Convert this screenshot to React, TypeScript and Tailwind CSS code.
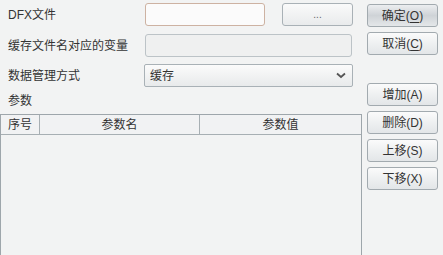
import React from "react";

const font = { fontFamily: '"Liberation Sans", "Noto Sans CJK SC", sans-serif' };

const SideButton = ({
  label,
  mnemonic,
  primary,
  underline,
  className,
}: {
  label: string;
  mnemonic: string;
  primary?: boolean;
  underline?: boolean;
  className?: string;
}) => (
  <button
    className={`w-[71px] h-[23px] flex items-center justify-center rounded-[3px] border border-[#a2aaaf] text-[12px] text-[#333] ${
      primary
        ? "bg-gradient-to-b from-[#eceef0] via-[#cfd3d7] to-[#e4e7e9]"
        : "bg-gradient-to-b from-[#fbfbfb] via-[#eef0f1] to-[#e3e6e8]"
    } ${className ?? ""}`}
  >
    {label}(
    <span className={underline ? "underline underline-offset-2" : ""}>
      {mnemonic}
    </span>
    )
  </button>
);

export default function App() {
  return (
    <div
      className="w-[443px] h-[255px] bg-[#f2f3f3] overflow-hidden flex text-[12px] text-[#333]"
      style={font}
    >
      {/* Left side */}
      <div className="w-[362px] pt-[3px] flex flex-col">
        <div className="flex items-center h-[23px]">
          <span className="w-[145px] pl-[8px]">DFX文件</span>
          <div className="w-[120px] h-[23px] rounded-[3px] border border-[#cdb2a2] bg-[#fbfbfb]" />
          <button className="ml-[17px] w-[71px] h-[23px] rounded-[3px] border border-[#a9b1b6] bg-gradient-to-b from-[#fafafa] to-[#e9ebec] text-[10px] text-[#666] leading-none">
            ...
          </button>
        </div>

        <div className="flex items-center h-[23px] mt-[8px]">
          <span className="w-[145px] pl-[8px]">缓存文件名对应的变量</span>
          <div className="w-[207px] h-[23px] rounded-[3px] border border-[#bcc3c7] bg-[#eff0f0]" />
        </div>

        <div className="flex items-center h-[23px] mt-[7px]">
          <span className="w-[144px] pl-[8px]">数据管理方式</span>
          <div className="w-[209px] h-[23px] rounded-[2px] border border-[#a9b1b6] bg-gradient-to-b from-[#fbfbfb] to-[#e8eaeb] flex items-center justify-between pl-[5px] pr-[6px]">
            <span>缓存</span>
            <svg width="10" height="7" viewBox="0 0 10 7">
              <path d="M1 1.5 L5 5 L9 1.5" fill="none" stroke="#555" strokeWidth="1.8" />
            </svg>
          </div>
        </div>

        <div className="h-[27px] flex items-center pl-[8px] pt-[1px]">参数</div>

        <div className="flex-1 border border-[#9ea6ab] border-b-0 bg-[#f2f3f3]">
          <div className="flex h-[20px] border-b border-[#a7afb3] bg-[#f1f2f3]">
            <div className="w-[39px] flex items-center justify-center border-r border-[#a7afb3]">序号</div>
            <div className="w-[160px] flex items-center justify-center border-r border-[#a7afb3]">参数名</div>
            <div className="flex-1 flex items-center justify-center">参数值</div>
          </div>
        </div>
      </div>

      {/* Right side buttons */}
      <div className="ml-[5px] pt-[4px] flex flex-col">
        <SideButton label="确定" mnemonic="O" primary underline />
        <SideButton label="取消" mnemonic="C" underline className="mt-[5px]" />
        <SideButton label="增加" mnemonic="A" className="mt-[28px]" />
        <SideButton label="删除" mnemonic="D" className="mt-[5px]" />
        <SideButton label="上移" mnemonic="S" className="mt-[5px]" />
        <SideButton label="下移" mnemonic="X" className="mt-[5px]" />
      </div>
    </div>
  );
}
